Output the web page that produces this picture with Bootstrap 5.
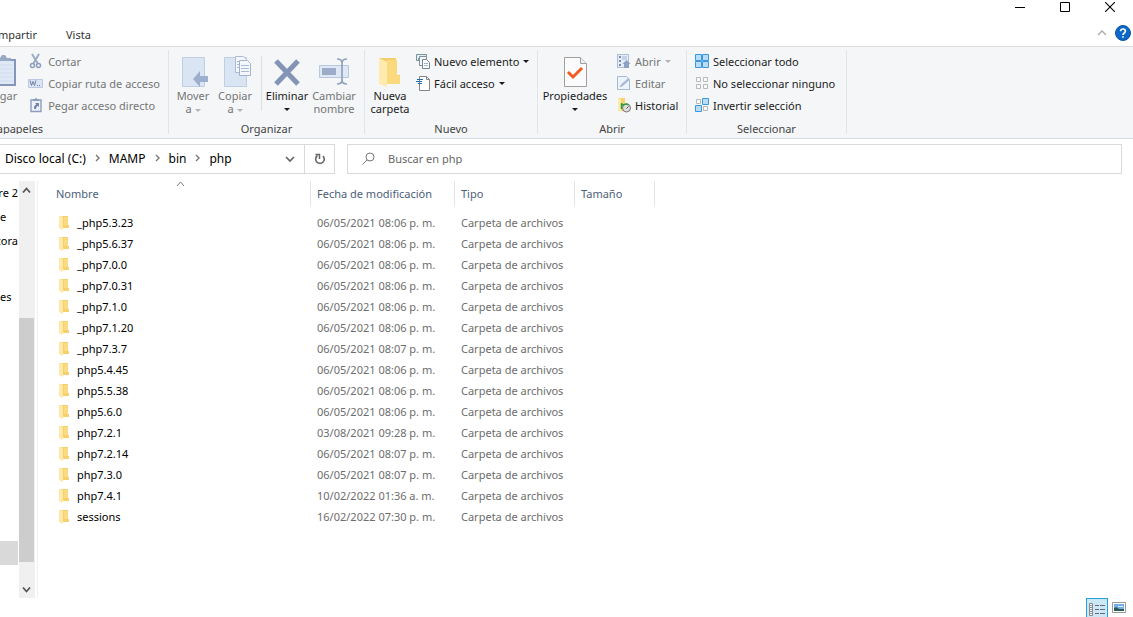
<!DOCTYPE html>
<html lang="es">
<head>
<meta charset="utf-8">
<meta name="viewport" content="width=device-width, initial-scale=1">
<title>php</title>
<link href="https://cdn.jsdelivr.net/npm/bootstrap@5.3.0/dist/css/bootstrap.min.css" rel="stylesheet">
<script src="https://cdn.jsdelivr.net/npm/bootstrap@5.3.0/dist/js/bootstrap.bundle.min.js" defer></script>
<style>
  body { font: 11px/13px "Noto Sans", "Open Sans", sans-serif; color: #1b1b1b; background: #fff; overflow: hidden; }
  svg { display: block; flex: none; }
  .btn { --bs-btn-padding-x: 0; --bs-btn-padding-y: 0; --bs-btn-border-width: 0; --bs-btn-border-radius: 0;
         --bs-btn-font-size: 11px; --bs-btn-line-height: 13px; --bs-btn-color: #1b1b1b;
         --bs-btn-disabled-color: #757575; --bs-btn-disabled-opacity: 1; }
  /* window caption */
  .caption { height: 15px; padding: 0 1px 1px 0; }
  .caption .btn { width: 45px; display: flex; justify-content: center; align-items: center; }
  .tab-row { height: 31px; padding: 9px 2px 0 0; }
  .tab-row a { color: #333; text-decoration: none; line-height: 22px; }
  .tab-cut { width: 37px; }
  .tab-vista { padding-left: 29px; }
  .tab-help { gap: 8px; padding-bottom: 4px; }
  /* ribbon */
  .ribbon { background: #f4f6f8; border-top: 1px solid #d9dcde; border-bottom: 1px solid #d9dcde; height: 93px; padding: 3px 0 4px; }
  .group { border-right: 1px solid #e1e3e5; }
  .group-title { color: #444; line-height: 16px; text-align: center; margin-top: auto; margin-bottom: -3px; }
  .g-clip { width: 169px; } .g-clip > div { width: 318px; }
  .g-org { width: 196px; } .g-new { width: 173px; } .g-open { width: 149px; } .g-sel { width: 160px; }
  .tools { padding-left: 3px; }
  .tools-col { padding-left: 5px; }
  .big { display: flex; flex-direction: column; align-items: center; padding-top: 3px; }
  .big .pic { width: 34px; height: 36px; }
  .big span { display: block; white-space: nowrap; }
  .w42 { width: 42px; } .w50 { width: 50px; } .w44 { width: 44px; } .w68 { width: 68px; }
  .mini { display: flex; align-items: center; gap: 4px; height: 22px; white-space: nowrap; }
  .arrow { display: inline-block; border: 3px solid transparent; border-top-color: currentColor; border-bottom: 0; vertical-align: middle; }
  .btn:disabled .arrow { border-top-color: #b3b3b3; }
  .ver { border-left: 1px solid #dcdfe2; height: 55px; margin: 6px 0 0 5px; }
  /* address and search */
  .bar { padding: 5px 11px 7px 0; gap: 12px; }
  .address { border: 1px solid #d9d9d9; border-left: 0; width: 335px; height: 30px; }
  .address a { color: #000; text-decoration: none; font-size: 12px; }
  .crumbs { gap: 9px; padding: 0 0 2px 5px; }
  .drop { width: 28px; }
  .refresh { border-left: 1px solid #d9d9d9; width: 30px; }
  .search { border: 1px solid #d9d9d9; height: 30px; gap: 13px; padding: 0 0 2px 14px; }
  .search input { border: 0; outline: 0; padding: 0; background: none; }
  .search input::placeholder { color: #666; opacity: 1; }
  /* navigation pane */
  .side { width: 19px; }
  .side a { display: block; height: 24px; line-height: 24px; color: #000; text-decoration: none; white-space: nowrap; flex: none; }
  .side .right { display: flex; justify-content: flex-end; padding-right: 1px; }
  .side .apart { margin-top: 32px; }
  .side .picked { background: #d9d9d9; margin: auto 1px 33px 0; }
  .scroller { width: 16px; background: #f0f0f0; }
  .scroller .btn { height: 18px; display: flex; align-items: center; justify-content: center; padding-right: 1px; }
  .thumb { background: #cdcdcd; width: 15px; flex-grow: 1; margin: 119px 0 18px; }
  .pane-edge { border-left: 1px solid #f0f0f0; margin-left: 2px; }
  /* file list */
  .files { table-layout: fixed; width: 617px; border-collapse: separate; border-spacing: 0; color: #6d6d6d; }
  .files th { font-weight: 400; color: #4c607a; height: 25px; border-right: 1px solid #e5e5e5; padding: 0 0 0 6px; }
  .files th:first-child { padding-left: 18px; }
  .files td { height: 21px; padding: 0 0 0 6px; white-space: nowrap; }
  .files td:first-child { padding-left: 20px; }
  .files tbody::before { content: ""; display: block; height: 6px; }
  .files a { display: flex; align-items: center; gap: 7px; color: #000; text-decoration: none; }
  .c-name { width: 273px; } .c-date { width: 144px; } .c-type { width: 120px; } .c-size { width: 80px; }
  .sorted { position: absolute; top: 0; left: 138px; }
  .views { gap: 4px; padding-right: 7px; height: 19px; }
  .views .btn { display: flex; justify-content: center; align-items: center; }
  .views .on { width: 22px; height: 21px; background: #cce8f6; border: 1px solid #26a0da; }
</style>
</head>
<body class="d-flex flex-column vh-100">
<svg width="0" height="0" class="position-absolute" aria-hidden="true">
  <symbol id="folder" viewBox="0 0 12 15"><path d="M1 1h9v9h1v3H1z" fill="#f5d06c"/><path d="M6 2h4v8H6z" fill="#fadb82"/><path d="M1 1h2l2 1v12l-1 1-3-2z" fill="#ffe9a6"/></symbol>
  <symbol id="next" viewBox="0 0 5 8"><path d="M1 1l3 3-3 3" fill="none" stroke="#777" stroke-width="1.4"/></symbol>
</svg>

<header>
  <div class="caption d-flex justify-content-end">
    <button class="btn" aria-label="Minimizar"><svg width="10" height="11"><path d="M0 5.500h10" stroke="#000"/></svg></button>
    <button class="btn" aria-label="Maximizar"><svg width="10" height="10"><path d="M.5.5h9v9h-9z" fill="none" stroke="#000"/></svg></button>
    <button class="btn" aria-label="Cerrar"><svg width="10" height="10"><path d="M0 0l10 10M10 0L0 10" stroke="#000" stroke-width="1.1"/></svg></button>
  </div>
  <nav class="tab-row d-flex">
    <div class="tab-cut d-flex justify-content-end overflow-hidden"><a href="#">mpartir</a></div>
    <a href="#" class="tab-vista">Vista</a>
    <div class="tab-help d-flex align-items-center ms-auto">
      <button class="btn" aria-label="Contraer la cinta"><svg width="10" height="6"><path d="M1 5l4-4 4 4" fill="none" stroke="#aaa" stroke-width="1.3"/></svg></button>
      <button class="btn" aria-label="Ayuda"><svg width="16" height="16"><circle cx="8" cy="8" r="7.500" fill="#0b68c8" stroke="#11579c"/><path d="M5.600 6.300Q5.700 4 8 4t2.400 2.100Q10.400 7.300 9 8.200q-1 .6-1 1.700M8 11.200v1.600" fill="none" stroke="#fff" stroke-width="1.700"/></svg></button>
    </div>
  </nav>
</header>

<section class="ribbon d-flex">
  <div class="group g-clip d-flex justify-content-end overflow-hidden">
    <div class="d-flex flex-column flex-shrink-0">
      <div class="d-flex justify-content-end">
        <button class="btn big w44 me-1" disabled><svg class="pic" viewBox="0 0 34 36"><path d="M3 7h27v25H3z" fill="#dfe8f5" stroke="#8596b8" stroke-width="2"/><path d="M5 12h23M5 16h23M5 20h23M5 24h23M5 28h23" stroke="#cfdcee"/><path d="M11 8V5h4l2-3h3l2 3h4v3z" fill="#98a9c6"/></svg><span>Pegar</span></button>
        <div class="me-2">
          <button class="btn mini" disabled><svg width="16" height="16"><path d="M4 1l6 10M11 1L5 11" stroke="#9aabc7" stroke-width="2"/><circle cx="4.500" cy="12.500" r="2" fill="none" stroke="#8d9dbb" stroke-width="1.500"/><circle cx="10.500" cy="12.500" r="2" fill="none" stroke="#8d9dbb" stroke-width="1.500"/></svg>Cortar</button>
          <button class="btn mini" disabled><svg width="16" height="16"><path d="M.5 4.500h14v8H.5z" fill="#dbe5f3" stroke="#bac9df"/><path d="M2 5.500l1.500 5 1.500-4 1.500 4 1.500-5M9 10.500h1M11 10.500h1" fill="none" stroke="#6b7fa6"/></svg>Copiar ruta de acceso</button>
          <button class="btn mini" disabled><svg width="16" height="16"><path d="M3 3h10v11.500H3z" fill="#edf2fa" stroke="#8d9dbe" stroke-width="1.400"/><path d="M5 4V2h2l1-1.500L9 2h2v2z" fill="#8d9dbe"/><path d="M7 6h4v4L9.700 8.700Q8 10 8 12H6Q5.500 9 8.300 7.300z" fill="#7385ad"/></svg>Pegar acceso directo</button>
        </div>
      </div>
      <div class="group-title">Portapapeles</div>
    </div>
  </div>

  <div class="group g-org d-flex flex-column">
    <div class="tools d-flex">
      <button class="btn big w42" disabled><svg class="pic" viewBox="0 0 34 36"><path d="M6.500 4.500h22v29h-22z" fill="#dae5f4" stroke="#c0cee2"/><path d="M17 26l7-8v5h8v6h-8v5z" fill="#9dafcc"/></svg><span>Mover</span><span>a <i class="arrow"></i></span></button>
      <button class="btn big w42" disabled><svg class="pic" viewBox="0 0 34 36"><path d="M6.500 4.500h22v29h-22z" fill="#dae5f4" stroke="#c0cee2"/><path d="M17.500 3.500h8l3 3v13h-11z" fill="#f4f8fc" stroke="#adbcd5"/><path d="M21.500 7.500h8l3 3v12h-11z" fill="#f4f8fc" stroke="#a2b3cf"/><path d="M23 12.500h8M23 15.500h8M23 18.500h8M19 8.500h2M19 11.500h2M19 14.500h2" stroke="#a9bad5"/></svg><span>Copiar</span><span>a <i class="arrow"></i></span></button>
      <div class="ver"></div>
      <button class="btn big w50"><svg class="pic" viewBox="0 0 34 36"><path d="M6 8l22 23M28 8L6 31" stroke="#8394b7" stroke-width="5"/></svg><span>Eliminar</span><span class="lh-1"><i class="arrow"></i></span></button>
      <button class="btn big w44" disabled><svg class="pic" viewBox="0 0 34 36"><path d="M2.500 12.500h29v12h-29z" fill="#dfe9f6" stroke="#b9c8de"/><path d="M5 15h14v7H5z" fill="#9dadc9"/><path d="M20 6q5 0 5 4v17q0 4-5 4M30 6q-5 0-5 4v17q0 4 5 4" fill="none" stroke="#91a2bf" stroke-width="1.700"/></svg><span>Cambiar</span><span>nombre</span></button>
    </div>
    <div class="group-title">Organizar</div>
  </div>

  <div class="group g-new d-flex flex-column">
    <div class="tools d-flex">
      <button class="btn big w44"><svg class="pic" viewBox="0 0 34 36"><path d="M6 5h17v17h4v9H6z" fill="#f4ce6d"/><path d="M14 7h10v16h3v8H14z" fill="#fada7d"/><path d="M6 5l8 4v25l-8-3z" fill="#ffebb0"/></svg><span>Nueva</span><span>carpeta</span></button>
      <div class="ps-1">
        <button class="btn mini"><svg width="14" height="16"><path d="M.5 1.500h10v6H.5z" fill="#e0f0f8" stroke="#829198"/><path d="M2 5h7v2H2z" fill="#69a8a0"/><path d="M3.500 3.500h7v9h-7z" fill="#f5f8fb" stroke="#829198"/><path d="M6.500 6.500h4l3 3v6h-7z" fill="#fff" stroke="#798898"/><path d="M8 10.500h4M8 12.500h4" stroke="#9bb8dd"/></svg>Nuevo elemento<i class="arrow"></i></button>
        <button class="btn mini"><svg width="14" height="16"><path d="M3.500 1.500h7l3 3v11h-10z" fill="#fff" stroke="#858585"/><path d="M10.500 1.500v3h3" fill="none" stroke="#858585"/><path d="M1 4.500h6M0 6.500h6M2 8.500h4" stroke="#206eb9"/></svg>Fácil acceso<i class="arrow"></i></button>
      </div>
    </div>
    <div class="group-title">Nuevo</div>
  </div>

  <div class="group g-open d-flex flex-column">
    <div class="tools d-flex">
      <button class="btn big w68 me-1"><svg class="pic" viewBox="0 0 34 36"><path d="M6.500 4.500h16l6 6v23h-22z" fill="#fbfbfb" stroke="#a0a0a0"/><path d="M22.500 4.500v6h6" fill="#eee" stroke="#a0a0a0"/><path d="M10 19l5 5 9-9" fill="none" stroke="#f15a22" stroke-width="3"/></svg><span>Propiedades</span><span class="lh-1"><i class="arrow"></i></span></button>
      <div class="ps-1">
        <button class="btn mini" disabled><svg width="14" height="16"><path d="M.5 1.500h11v13H.5z" fill="#e5edf7" stroke="#adbdd5"/><path d="M2 3h2v2H2zM2 7h2v2H2zM2 11h2v2H2z" fill="#788bb0"/><path d="M5 3h5v4H5z" fill="#c4d2e6"/><path d="M9.500 7l4 4H12v4H7v-4H5.500z" fill="#8fa1c2"/></svg>Abrir<i class="arrow"></i></button>
        <button class="btn mini" disabled><svg width="14" height="16"><path d="M.5 1.500h9l3 3v10H.5z" fill="#edf3fb" stroke="#a8b9d3"/><path d="M3 12l1-3 7-6 2 2-7 6z" fill="#bdcde4"/><path d="M3 12L12 4" stroke="#91a5c5"/></svg>Editar</button>
        <button class="btn mini"><svg width="14" height="16"><path d="M1 1h7v8h3v5H1z" fill="#f6d36f"/><path d="M1 1l3 1v13l-3-2z" fill="#ffecad"/><circle cx="9.500" cy="11" r="4" fill="#ddd" stroke="#777"/><path d="M4.500 12V7l2 1q3-2 5 0" fill="none" stroke="#2b9c3e" stroke-width="1.500"/><path d="M9.500 11.500l2-2" stroke="#555"/></svg>Historial</button>
      </div>
    </div>
    <div class="group-title">Abrir</div>
  </div>

  <div class="group g-sel d-flex flex-column">
    <div class="ps-2">
      <button class="btn mini"><svg width="14" height="14"><path d="M.5.5h6v6h-6zM7.500.5h6v6h-6zM.5 7.500h6v6h-6zM7.500 7.500h6v6h-6z" fill="#b9ddf8" stroke="#3d98de"/></svg>Seleccionar todo</button>
      <button class="btn mini"><svg width="14" height="14"><path d="M1.500 1.500h4v4h-4zM8.500 1.500h4v4h-4zM1.500 8.500h4v4h-4zM8.500 8.500h4v4h-4z" fill="#fafafa" stroke="#b9b9b9"/></svg>No seleccionar ninguno</button>
      <button class="btn mini"><svg width="14" height="14"><path d="M1.500 1.500h4v4h-4zM8.500 8.500h4v4h-4z" fill="#fafafa" stroke="#b9b9b9"/><path d="M7.500.5h6v6h-6zM.5 7.500h6v6h-6z" fill="#b9ddf8" stroke="#3d98de"/></svg>Invertir selección</button>
    </div>
    <div class="group-title">Seleccionar</div>
  </div>
</section>

<section class="bar d-flex">
  <div class="address d-flex flex-shrink-0">
    <nav class="crumbs d-flex align-items-center flex-grow-1">
      <a href="#">Disco local (C:)</a><svg width="5" height="8"><use href="#next"/></svg>
      <a href="#">MAMP</a><svg width="5" height="8"><use href="#next"/></svg>
      <a href="#">bin</a><svg width="5" height="8"><use href="#next"/></svg>
      <a href="#">php</a>
    </nav>
    <button class="btn drop d-flex align-items-center justify-content-center" aria-label="Ubicaciones anteriores"><svg width="10" height="7"><path d="M1 1l4 4 4-4" fill="none" stroke="#666" stroke-width="1.700"/></svg></button>
    <button class="btn refresh d-flex align-items-center justify-content-center" aria-label="Actualizar"><svg width="12" height="12"><path d="M8.500 2.500A4.300 4.300 0 1 1 3 3" fill="none" stroke="#666" stroke-width="1.600" transform="matrix(-1 0 0 1 12 0)"/><path d="M1.500 1.500h4V6" fill="none" stroke="#666" stroke-width="1.500"/></svg></button>
  </div>
  <label class="search d-flex align-items-center flex-grow-1">
    <svg width="13" height="13"><circle cx="8" cy="5" r="4" fill="none" stroke="#777"/><path d="M5 8l-4.500 4.500" stroke="#777"/></svg>
    <input type="search" class="flex-grow-1" placeholder="Buscar en php" aria-label="Buscar en php">
  </label>
</section>

<main class="d-flex flex-grow-1">
  <nav class="side d-flex flex-column overflow-hidden">
    <a href="#" class="right">re 2</a>
    <a href="#">e</a>
    <a href="#" class="right">cora</a>
    <a href="#" class="apart">es</a>
    <a href="#" class="picked" aria-label="Disco local (C:)"></a>
  </nav>
  <div class="scroller d-flex flex-column">
    <button class="btn" aria-label="Subir"><svg width="9" height="7"><path d="M1 5.500l3.500-4L8 5.500" fill="none" stroke="#555" stroke-width="1.800"/></svg></button>
    <div class="thumb"></div>
    <button class="btn" aria-label="Bajar"><svg width="9" height="7"><path d="M1 1.500l3.500 4L8 1.500" fill="none" stroke="#555" stroke-width="1.800"/></svg></button>
  </div>
  <div class="pane-edge position-relative">
    <svg class="sorted" width="9" height="6"><path d="M1 5l3.500-4L8 5" fill="none" stroke="#777"/></svg>
    <table class="files">
      <colgroup><col class="c-name"><col class="c-date"><col class="c-type"><col class="c-size"></colgroup>
      <thead><tr><th>Nombre</th><th>Fecha de modificación</th><th>Tipo</th><th>Tamaño</th></tr></thead>
      <tbody id="rows"></tbody>
    </table>
  </div>
</main>

<footer class="views d-flex justify-content-end overflow-hidden">
  <button class="btn on" aria-label="Detalles"><svg width="16" height="16"><path d="M.5 2.500h3v4h-3zM.5 6.500h3v4h-3zM.5 10.500h3v4h-3z" fill="#fff" stroke="#888"/><path d="M2 4v1M2 8v1M2 12v1" stroke="#333"/><path d="M6 4.500h4M11 4.500h5M6 8.500h4M11 8.500h5M6 12.500h4M11 12.500h5" stroke="#667"/></svg></button>
  <button class="btn" aria-label="Iconos grandes"><svg width="14" height="11"><path d="M.5.5h13v10H.5z" fill="#fff" stroke="#999"/><path d="M2 2h10v7H2z" fill="#6fb0ec"/><path d="M2 6q3-2 5 1l5 0v2H2z" fill="#2b5a55"/><path d="M6 4h5v1H6z" fill="#e8f3fc"/></svg></button>
</footer>

<script>
  const items = [
    ["_php5.3.23", "06/05/2021 08:06 p. m."], ["_php5.6.37", "06/05/2021 08:06 p. m."],
    ["_php7.0.0", "06/05/2021 08:06 p. m."], ["_php7.0.31", "06/05/2021 08:06 p. m."],
    ["_php7.1.0", "06/05/2021 08:06 p. m."], ["_php7.1.20", "06/05/2021 08:06 p. m."],
    ["_php7.3.7", "06/05/2021 08:07 p. m."], ["php5.4.45", "06/05/2021 08:06 p. m."],
    ["php5.5.38", "06/05/2021 08:06 p. m."], ["php5.6.0", "06/05/2021 08:06 p. m."],
    ["php7.2.1", "03/08/2021 09:28 p. m."], ["php7.2.14", "06/05/2021 08:07 p. m."],
    ["php7.3.0", "06/05/2021 08:07 p. m."], ["php7.4.1", "10/02/2022 01:36 a. m."],
    ["sessions", "16/02/2022 07:30 p. m."]
  ];
  document.getElementById("rows").innerHTML = items.map(([name, date]) =>
    `<tr><td><a href="#"><svg width="12" height="15"><use href="#folder"/></svg>${name}</a></td><td>${date}</td><td>Carpeta de archivos</td></tr>`).join("");
</script>
</body>
</html>
